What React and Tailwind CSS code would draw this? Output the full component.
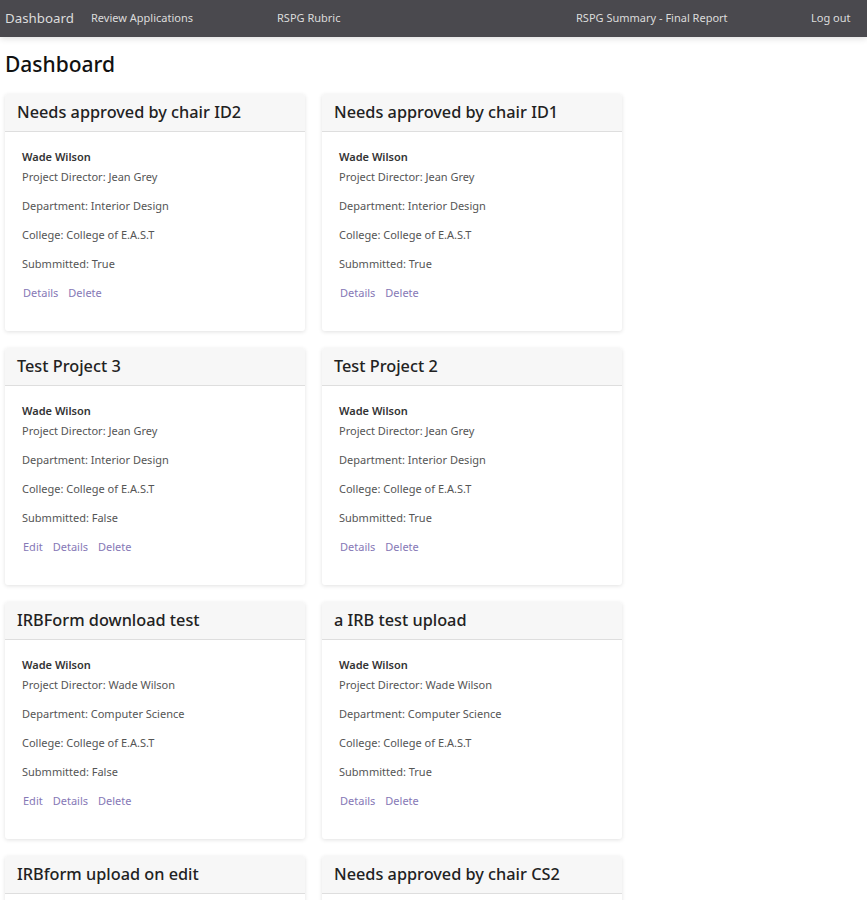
import React from 'react';

const projects = [
  { title: 'Needs approved by chair ID2', director: 'Jean Grey', dept: 'Interior Design', submitted: 'True' },
  { title: 'Needs approved by chair ID1', director: 'Jean Grey', dept: 'Interior Design', submitted: 'True' },
  { title: 'Test Project 3', director: 'Jean Grey', dept: 'Interior Design', submitted: 'False' },
  { title: 'Test Project 2', director: 'Jean Grey', dept: 'Interior Design', submitted: 'True' },
  { title: 'IRBForm download test', director: 'Wade Wilson', dept: 'Computer Science', submitted: 'False' },
  { title: 'a IRB test upload', director: 'Wade Wilson', dept: 'Computer Science', submitted: 'True' },
  { title: 'IRBform upload on edit', director: 'Wade Wilson', dept: 'Computer Science', submitted: 'False' },
  { title: 'Needs approved by chair CS2', director: 'Wade Wilson', dept: 'Computer Science', submitted: 'True' },
];

function ProjectCard({ project }) {
  return (
    <div className="bg-white rounded-[3px] shadow-[0_1px_4px_rgba(0,0,0,0.12)]">
      <div className="h-[38px] bg-[#f7f7f7] border-b border-[#dedede] rounded-t-[3px] px-3 flex items-center">
        <h3 className="text-[16.3px] text-[#222] font-medium">{project.title}</h3>
      </div>
      <div className="pt-[15px] pb-[24px] pl-[17px] text-[11px] text-[#555]">
        <div className="h-[20px] leading-[20px] font-semibold text-[#333]">Wade Wilson</div>
        <div className="h-[20px] leading-[20px]">Project Director: {project.director}</div>
        <div className="h-[4px]" />
        <div className="h-[29px] leading-[29px]">Department: {project.dept}</div>
        <div className="h-[29px] leading-[29px]">College: College of E.A.S.T</div>
        <div className="h-[29px] leading-[29px]">Submmitted: {project.submitted}</div>
        <div className="h-[29px] leading-[29px] flex gap-[10px] text-[#8678b6] pl-[1px]">
          {project.submitted === 'False' && <a href="#">Edit</a>}
          <a href="#">Details</a>
          <a href="#">Delete</a>
        </div>
      </div>
    </div>
  );
}

function App() {
  return (
    <div className="min-h-screen bg-white font-['Noto_Sans',sans-serif]">
      <nav className="h-[37px] bg-[#4a494e] flex items-center text-[#dcdcdc] shadow-[0_2px_6px_rgba(0,0,0,0.12)]">
        <a href="#" className="ml-[5px] text-[13.3px] w-[86px]">Dashboard</a>
        <a href="#" className="text-[11px] w-[186px]">Review Applications</a>
        <a href="#" className="text-[11px] w-[299px]">RSPG Rubric</a>
        <a href="#" className="text-[11px] w-[235px]">RSPG Summary - Final Report</a>
        <a href="#" className="text-[11px]">Log out</a>
      </nav>
      <div className="px-[5px]">
        <h1 className="text-[21px] font-medium text-[#111] pt-[12px] pb-[14px] leading-[31px]">Dashboard</h1>
        <div className="grid grid-cols-[300px_300px] gap-x-[17px] gap-y-[17px]">
          {projects.map((p) => (
            <ProjectCard key={p.title} project={p} />
          ))}
        </div>
      </div>
    </div>
  );
}

export default App;
